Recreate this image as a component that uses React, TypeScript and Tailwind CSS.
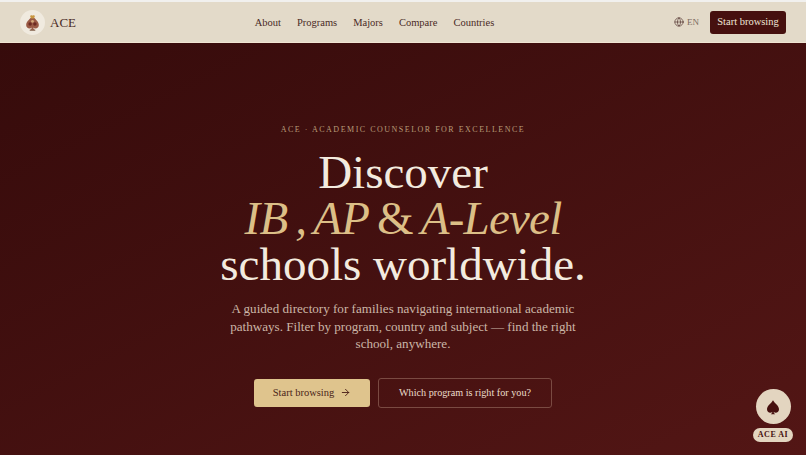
import React from 'react';
import { ArrowRight, Globe } from 'lucide-react';

const navLinks = ['About', 'Programs', 'Majors', 'Compare', 'Countries'];

const serif = 'font-["Liberation_Serif",serif]';

const spadePath =
  'M12 3C10 7 4 10 4 15c0 2.700 2 4.500 4.300 4.500 1.200 0 2.200-.5 2.900-1.200-.3 1.500-1 2.400-2.200 3.200h6c-1.200-.8-1.900-1.700-2.200-3.200.7.7 1.700 1.200 2.900 1.200C18 19.500 20 17.700 20 15c0-5-6-8-8-12z';

const Spade = ({ className }: { className?: string }) => (
  <svg viewBox="0 0 24 24" className={className} fill="currentColor">
    <path d={spadePath} />
  </svg>
);

const LogoMark = () => (
  <svg viewBox="0 0 24 24" className="w-[19px] h-[19px]">
    <path d={spadePath} fill="#9a5a45" />
    <path d="M9 4.500 L10 2.500 L12 3.500 L14 2.500 L15 4.500 L13.500 7 L10.500 7 Z" fill="#c8963f" />
    <circle cx="9" cy="14" r="2.200" fill="#6d2a22" />
    <circle cx="15" cy="14" r="2.200" fill="#6d2a22" />
    <circle cx="12" cy="10.500" r="1.800" fill="#d2a678" />
    <rect x="8.500" y="21" width="7" height="1.500" fill="#8a6a55" />
  </svg>
);

const Navbar = () => (
  <header className="bg-[#e3dac9] border-b border-[#f0e4d2]">
    <div className="h-[2px] bg-[#f1f0ee]" />
    <div className="h-[40px] flex items-center justify-between px-[20px]">
      <div className="flex items-center gap-[5px]">
        <div className="w-[25px] h-[25px] rounded-full bg-[#f0eadf] flex items-center justify-center">
          <LogoMark />
        </div>
        <span className={`${serif} text-[13px] pt-[1px] text-[#4a2a26]`}>ACE</span>
      </div>
      <nav className={`${serif} flex items-center gap-[16px] pt-[1px] mr-[1px] text-[10.500px] text-[#4a2a26]`}>
        {navLinks.map((link) => (
          <a key={link} href="#">
            {link}
          </a>
        ))}
      </nav>
      <div className="flex items-center gap-[11px]">
        <div className={`${serif} flex items-center gap-[3px] text-[9px] text-[#7b6a60]`}>
          <Globe className="w-[10px] h-[10px] text-[#4a2a26]" strokeWidth={1.5} />
          <span className="pt-[1px]">EN</span>
        </div>
        <button className={`${serif} w-[76px] h-[23px] rounded-[3px] bg-[#46100f] text-[#efe6d8] text-[10.500px]`}>
          Start browsing
        </button>
      </div>
    </div>
  </header>
);

const Hero = () => (
  <main className="relative h-[412px] bg-linear-to-br from-[#360b0b] to-[#531615] flex flex-col items-center pt-[82px]">
    <p className={`${serif} text-[8px] leading-[10px] tracking-[1.500px] text-[#b89b78]`}>
      ACE · ACADEMIC COUNSELOR FOR EXCELLENCE
    </p>
    <h1 className={`${serif} mt-[14px] text-center text-[47px] leading-[46px] text-[#f3ebdf]`}>
      <span className="block">Discover</span>
      <span className="block text-[#dcbf87] tracking-[-0.8px] [word-spacing:-3px]">
        <em>IB , AP</em> &amp; <em>A-Level</em>
      </span>
      <span className="block">schools worldwide.</span>
    </h1>
    <p className={`${serif} mt-[13px] w-[360px] text-center text-[13.100px] leading-[17.500px] text-[#cbb6a7]`}>
      A guided directory for families navigating international academic pathways. Filter by program, country and
      subject — find the right school, anywhere.
    </p>
    <div className={`${serif} mt-[25px] flex items-center gap-[8px]`}>
      <button className="w-[116px] h-[28px] rounded-[3px] bg-[#dfc48d] text-[#4a1f18] text-[10.500px] flex items-center justify-center gap-[6px]">
        Start browsing
        <ArrowRight className="w-[11px] h-[11px]" />
      </button>
      <button className="w-[174px] h-[30px] rounded-[3px] border border-[#7a4a42] text-[#ecdfcd] text-[10.200px]">
        Which program is right for you?
      </button>
    </div>
    <div className="absolute right-[13px] bottom-[13px] flex flex-col items-center gap-[4px]">
      <div className="w-[35px] h-[35px] rounded-full bg-[#e3d5c0] flex items-center justify-center">
        <Spade className="w-[18px] h-[18px] text-[#46100f]" />
      </div>
      <div className={`${serif} w-[40px] h-[14px] rounded-full bg-[#e3d5c0] text-[#46100f] text-[8px] font-bold tracking-[0.5px] flex items-center justify-center`}>
        ACE AI
      </div>
    </div>
  </main>
);

export default function App() {
  return (
    <div className="w-[806px] h-[455px] overflow-hidden">
      <Navbar />
      <Hero />
    </div>
  );
}
